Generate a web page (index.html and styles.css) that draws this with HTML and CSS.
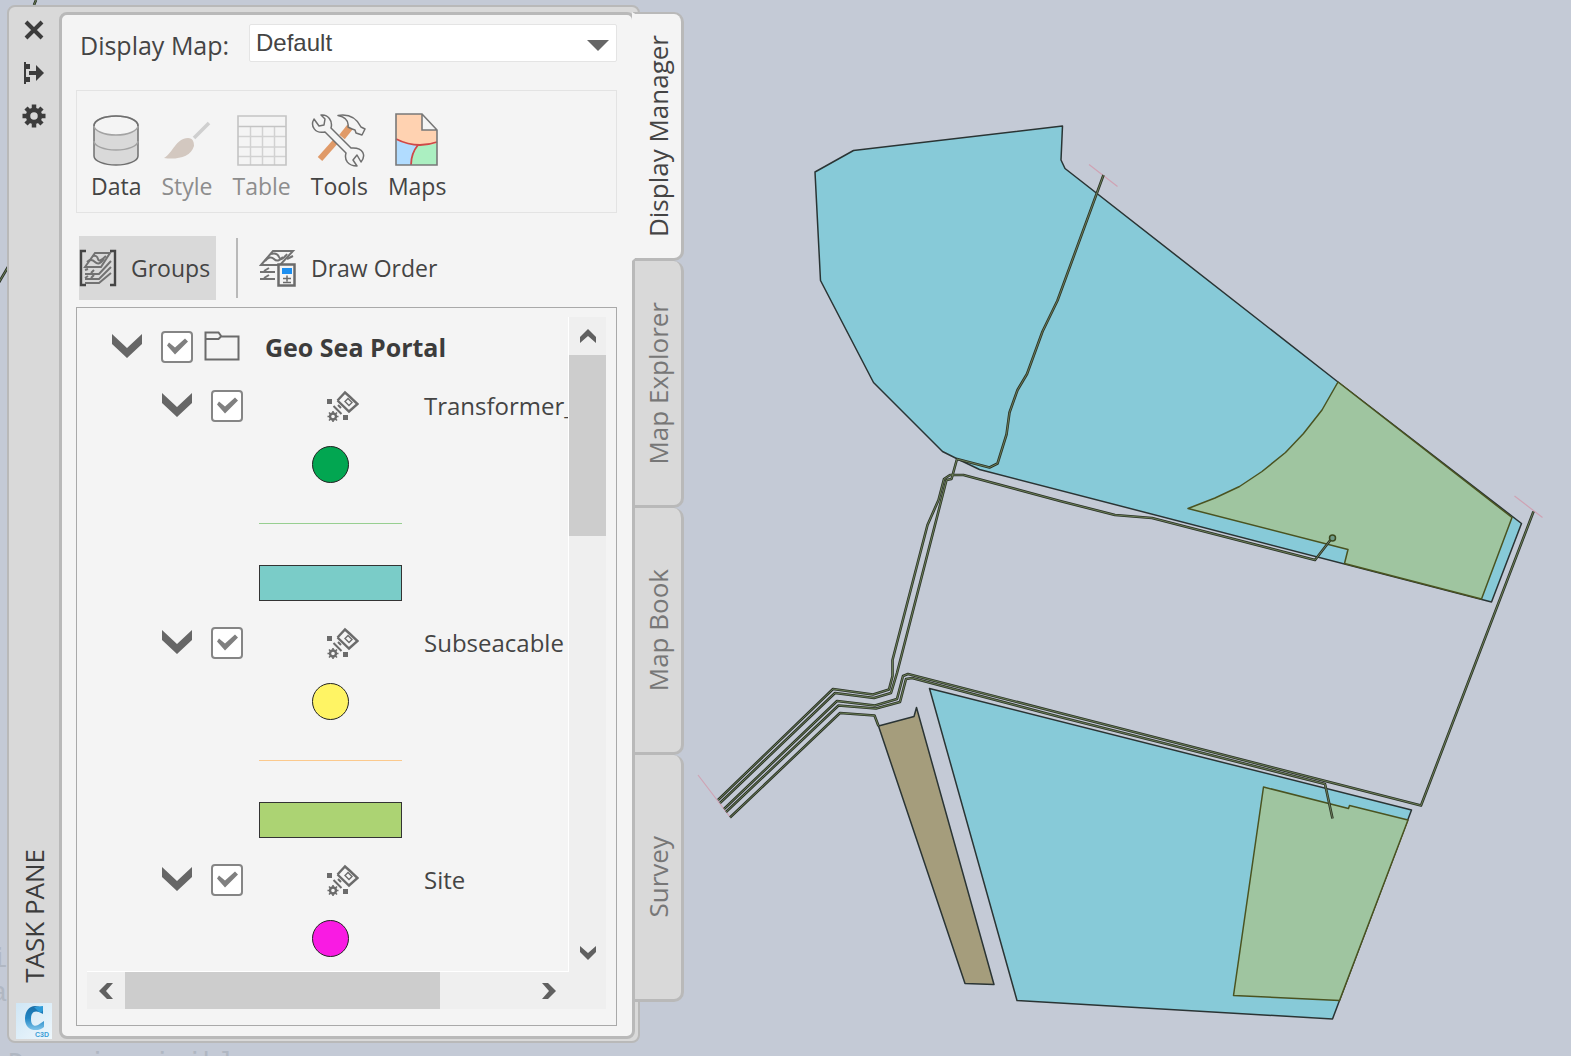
FILE: index.html
```html
<!DOCTYPE html>
<html lang="en">
<head>
<meta charset="utf-8">
<title>Task Pane</title>
<link rel="stylesheet" href="styles.css">
</head>
<body>
<svg class="drawing" viewBox="0 0 1571 1056" preserveAspectRatio="xMinYMin slice" role="img" aria-label="Map drawing">
  <defs>
    <g id="cables">
      <path d="M718 800L833 689L873 694.500L889 689.500L892.500 676L892.500 660L927.500 525L938.500 500L944 479L950 475L963.500 475L1060 501L1115 515L1152 518L1315 560L1332 538"/>
      <path d="M720 803L835 693L874 698L891 693L897 673L946.500 480L951.500 479L957 459L989.500 467.500L997.500 463.500L1006.500 434.500L1009.500 412.500L1017.500 390L1027 374L1042.500 331.500L1057.500 300.500L1103.500 175"/>
      <path d="M724 809L837 701L875 705.500L897 699L903 676L908 674L1060 713L1421 805.500L1533.500 511.500"/>
      <path d="M726 812L838.500 705.500L876 708.500L900 702L906 679L912 678L1060 717L1325 784L1332.500 818.500"/>
      <path d="M730 817.500L840 713L874.500 715.500L878.500 726"/>
      <path d="M36 0L34 5M8 267L-2 284"/>
    </g>
    <g id="scatter" fill="none" stroke="#6b6b6b" stroke-width="2.400">
      <path d="M18.500 9.500L26 1.500L30.500 5.500M30.500 5.500L38.500 13L30 20.500L18.500 9.500" transform="translate(-8 1)"/>
      <path d="M18 11.500l3-3 4 4-3 3z" stroke-width="1.400"/>
      <path d="M6.500 16l8 8M11 15l3 3" stroke-width="2"/>
      <path d="M0 9h5v5h-5zM16 25h5v5h-5z" fill="#6b6b6b" stroke="none"/>
      <circle cx="6" cy="26.500" r="3"/>
      <path d="M6 21v3M6 29v3M.5 26.500h3M8.500 26.500h3M2 22.500l2 2M10 22.500l-2 2M2 30.500l2-2M10 30.500l-2-2" stroke-width="1.600"/>
    </g>
    <g id="layers" fill="none" stroke="#727272" stroke-width="2">
      <path d="M1 15L13 1H33L20 15Z"/>
      <path d="M5 11q5-6 9-2t9-2M11 4q6-2 8 3t8-3" />
    </g>
  </defs>
  <g stroke="#2a3434" stroke-width="1.500" stroke-linejoin="round">
    <path fill="#87cad8" d="M815 172L853.500 150.500L1062.500 126L1061 160L1065 168.500L1338 382L1521.500 523.500L1491.500 602L979.500 469.500L956.500 458.500L942.500 451.500L873.500 382.500L820.500 280.500Z"/>
    <path fill="#87cad8" d="M929.500 688.500L1411.500 810L1332.500 1019L1017 1000.500Z"/>
    <g fill="#9fc5a0" stroke="#4a5320">
      <path d="M1338 382L1322 410L1303.500 433.500L1285.500 452.500L1262 471.500L1239.500 486.500L1215 498L1188 508.500L1348 549.500L1344.500 563.500L1481.500 599L1512 517.500Z"/>
      <path d="M1263.500 787L1348.500 808.500L1349.500 805.500L1408 820L1339.500 1000.500L1233.500 995.500Z"/>
    </g>
    <path fill="#a59d7c" d="M878.500 726L914 716.500L916.500 707.500L994 984.500L965 983.500Z"/>
  </g>
  <path fill="none" stroke="#cfa3b4" stroke-width="1.200" d="M698 775L730 817M1089 164.500L1117.500 186.500M1514.500 496L1542.500 517.500"/>
  <g fill="none" stroke-linejoin="round">
    <use href="#cables" stroke="#2b3228" stroke-width="2.600"/>
    <use href="#cables" stroke="#72875a" stroke-width=".9"/>
    <circle cx="1332.500" cy="538" r="3" stroke="#3c4a20" stroke-width="1.500" fill="#6f9a88"/>
  </g>
  <g class="ghost">
    <text x="-9" y="967">i</text>
    <text x="-9" y="1001">a</text>
    <text x="8" y="1071">Dynamic visible</text>
  </g>
</svg>

<main class="pane">
  <div class="frame">
    <aside class="rail">
      <button class="rail-btn" type="button" aria-label="Close"><svg width="24" height="24"><path d="M4 4L20 20M20 4L4 20" stroke="#3c3c3c" stroke-width="4" fill="none"/></svg></button>
      <button class="rail-btn" type="button" aria-label="Auto-hide"><svg width="24" height="24"><path d="M2 1h2v22H2zM4 3h4v5H4zM4 16h4v5H4z" fill="#3c3c3c"/><path d="M7 10h7V4l8 8-8 8v-6H7z" fill="#3c3c3c"/></svg></button>
      <button class="rail-btn" type="button" aria-label="Properties"><svg width="24" height="24"><circle cx="12" cy="12" r="6" fill="none" stroke="#3c3c3c" stroke-width="4.500"/><path d="M12 .5v4M12 19.500v4M.5 12h4M19.500 12h4M4 4l3 3M17 17l3 3M20 4l-3 3M7 17l-3 3" stroke="#3c3c3c" stroke-width="4.500"/></svg></button>
      <h1 class="rail-title">TASK PANE</h1>
      <svg class="logo" width="36" height="36" viewBox="0 0 36 36" aria-hidden="true">
        <defs>
          <linearGradient id="tile" x2="1" y2="1"><stop offset="0" stop-color="#cfe6f5"/><stop offset="1" stop-color="#eef7fc"/></linearGradient>
          <linearGradient id="cee" x2="0" y2="1"><stop offset="0" stop-color="#1b6fa8"/><stop offset=".5" stop-color="#1f85c4"/><stop offset="1" stop-color="#7fc4ea"/></linearGradient>
        </defs>
        <path d="M0 0h36v36H0z" fill="url(#tile)"/>
        <path d="M27 5.500V11l-4-2c-6-2-8 2-8 7 0 6 3 8 7 6l6-4v6c-5 5-19 5-19-8C9 6 16-1 27 5.500z" fill="url(#cee)"/>
        <path d="M23 9c3 1 4-1 4-3V3l-9 1" fill="#2d9bd8"/>
        <text class="logo-text" x="19" y="34">C3D</text>
      </svg>
    </aside>

    <section class="panel" id="display-manager" role="tabpanel" aria-label="Display Manager">
      <div class="map-row">
        <label class="map-label" for="display-map">Display Map:</label>
        <div class="select-wrap">
          <select class="map-select" id="display-map"><option>Default</option></select>
          <svg class="caret" width="22" height="12" aria-hidden="true"><path d="M0 0h22L11 11z" fill="#666"/></svg>
        </div>
      </div>

      <div class="toolbar">
        <button class="tool" type="button">
          <svg width="48" height="56" fill="none"><path d="M2 13v30c0 5 10 9 22 9s22-4 22-9V13" fill="#d9d9d9" stroke="#6f6f6f" stroke-width="1.500"/><path d="M2 28c0 5 10 9 22 9s22-4 22-9" stroke="#a3a3a3" stroke-width="1.500"/><ellipse cx="24" cy="12.500" rx="22" ry="9.500" fill="#f4f4f4" stroke="#a3a3a3" stroke-width="1.500"/><path d="M2 13C2 7 12 3 24 3s22 4 22 10" stroke="#6f6f6f" stroke-width="1.500"/></svg>
          Data
        </button>
        <button class="tool" type="button" disabled>
          <svg width="48" height="56" fill="none"><path d="M31 25L46 10" stroke="#cfcfcf" stroke-width="3.500"/><path d="M1 45C10 40 13 25 25 25c5 0 6 4 6 8-3 11-17 14-30 12z" fill="#d3c8c0"/></svg>
          Style
        </button>
        <button class="tool" type="button" disabled>
          <svg width="50" height="56" fill="none"><path d="M13.500 14v38M25.500 14v38M37.500 14v38M1 23.500h48M1 34h48M1 43.500h48" stroke="#d2d2d2" stroke-width="1.500"/><path d="M1 3h48v49H1zM1 13.500h48" stroke="#c4c4c4" stroke-width="1.600"/></svg>
          Table
        </button>
        <button class="tool" type="button">
          <svg width="56" height="56" fill="none"><path d="M9 46L25 28" stroke="#e09a68" stroke-width="6"/><path d="M31 24L39 14" stroke="#e09a68" stroke-width="7"/><g stroke="#6f6f6f" stroke-width="1.500" stroke-linejoin="round"><path d="M27 2.500C36 1 45 4 50 14l4 2-3 6-6-2-1-3c-4-1-5-2-7-3 1-6-3-10-10-11.500z" fill="#f4f4f4"/><path d="M10 2L14 6 13 12 8 13 3 6C-1 13 4 21 14 19L35 40c-2 7 2 13 11 13L42 47 46 42 50 49C55 43 53 34 40 35L20 15C22 8 17 1 10 2z" fill="#f4f4f4"/></g></svg>
          Tools
        </button>
        <button class="tool" type="button">
          <svg width="46" height="56"><path d="M2 1h26l15 16v35H2z" fill="#ffd2b1"/><path d="M2 27c7 3 14 5 22 5-5 6-7 13-7 20H2z" fill="#b1dcff"/><path d="M24 32c7 0 13 0 19-2v22H17c0-7 2-14 7-20z" fill="#abefc1"/><path d="M28 1v16h15z" fill="#f4f4f4"/><g fill="none"><path d="M2 26c12 6 27 8 41 3M24 32c-5 6-7 13-7 20" stroke="#cf4848" stroke-width="1.800"/><path d="M2 1h26l15 16v35H2zM28 1v16h15" stroke="#787878" stroke-width="1.600"/></g></svg>
          Maps
        </button>
      </div>

      <div class="modes">
        <button class="mode mode-on" type="button" aria-pressed="true">
          <svg width="38" height="38" fill="none"><path d="M7 2H2v34h5M31 2h5v34h-5" stroke="#454545" stroke-width="2.400"/><g stroke="#727272" stroke-width="2"><path d="M6 18L16 4h15L22 18z"/><path d="M8 13q4-4 8 0t9-3M14 7q4-1 5 3t8-3"/><path d="M6 25h14L32 12M6 21l3-1M12 24l3-3M6 30h14L32 18M12 29l3-3M6 34h14L32 24M6 29l3-2"/></g></svg>
          Groups
        </button>
        <span class="divider"></span>
        <button class="mode" type="button" aria-pressed="false">
          <svg width="38" height="38" fill="none"><use href="#layers" x="1" y="1"/><path d="M1 23h15M1 30h15M5 22l5-3M5 29l5-3M28 10l6-3" stroke="#727272" stroke-width="2"/><path d="M19.500 15.500h16v21h-16z" fill="#f4f4f4" stroke="#6b6b6b" stroke-width="2.500"/><path d="M23 19h10v6H23z" fill="#1d8ff0"/><path d="M28 26.500v6M24 29.500h8M24 33.500h8" stroke="#6b6b6b" stroke-width="1.500"/></svg>
          Draw Order
        </button>
      </div>

      <div class="tree-box">
        <ul class="tree">
          <li>
            <div class="row row-root">
              <svg class="chevron" width="30" height="26"><path d="M0 0l15 14L30 0v10L15 24 0 10z"/></svg>
              <input class="check" type="checkbox" id="l0" checked>
              <svg class="folder" width="36" height="32" fill="none"><path d="M1.500 28.500V1.500h13l3 4h17v23zM1.500 8h13l3-3" stroke="#6b6b6b" stroke-width="2"/></svg>
              <label class="root-name" for="l0">Geo Sea Portal</label>
            </div>
            <ul class="layers">
              <li class="layer">
                <div class="row">
                  <svg class="chevron" width="30" height="26"><path d="M0 0l15 14L30 0v10L15 24 0 10z"/></svg>
                  <input class="check" type="checkbox" id="l1" checked>
                  <svg class="layer-icon" width="32" height="32"><use href="#scatter"/></svg>
                  <label for="l1">Transformer_</label>
                </div>
                <div class="swatch"><span class="dot dot-green"></span></div>
                <div class="swatch"><span class="line line-green"></span></div>
                <div class="swatch"><span class="fill fill-teal"></span></div>
              </li>
              <li class="layer">
                <div class="row">
                  <svg class="chevron" width="30" height="26"><path d="M0 0l15 14L30 0v10L15 24 0 10z"/></svg>
                  <input class="check" type="checkbox" id="l2" checked>
                  <svg class="layer-icon" width="32" height="32"><use href="#scatter"/></svg>
                  <label for="l2">Subseacable</label>
                </div>
                <div class="swatch"><span class="dot dot-yellow"></span></div>
                <div class="swatch"><span class="line line-orange"></span></div>
                <div class="swatch"><span class="fill fill-lime"></span></div>
              </li>
              <li class="layer">
                <div class="row">
                  <svg class="chevron" width="30" height="26"><path d="M0 0l15 14L30 0v10L15 24 0 10z"/></svg>
                  <input class="check" type="checkbox" id="l3" checked>
                  <svg class="layer-icon" width="32" height="32"><use href="#scatter"/></svg>
                  <label for="l3">Site</label>
                </div>
                <div class="swatch"><span class="dot dot-pink"></span></div>
              </li>
            </ul>
          </li>
        </ul>
        <div class="bar bar-v">
          <button class="bar-btn" type="button" aria-label="Scroll up"><svg width="18" height="16"><path d="M1 15V9l8-8 8 8v6l-8-7z"/></svg></button>
          <span class="thumb"></span>
          <button class="bar-btn bar-end" type="button" aria-label="Scroll down"><svg width="18" height="16"><path d="M1 1v6l8 8 8-8V1L9 8z"/></svg></button>
        </div>
        <div class="bar bar-h">
          <button class="bar-btn" type="button" aria-label="Scroll left"><svg width="16" height="18"><path d="M15 1H9L1 9l8 8h6L8 9z"/></svg></button>
          <span class="thumb"></span>
          <button class="bar-btn bar-end" type="button" aria-label="Scroll right"><svg width="16" height="18"><path d="M1 1h6l8 8-8 8H1l7-8z"/></svg></button>
        </div>
      </div>
    </section>
  </div>

  <div class="tabs" role="tablist" aria-orientation="vertical">
    <button class="tab tab-on" type="button" role="tab" aria-selected="true"><span>Display Manager</span></button>
    <button class="tab" type="button" role="tab" aria-selected="false"><span>Map Explorer</span></button>
    <button class="tab" type="button" role="tab" aria-selected="false"><span>Map Book</span></button>
    <button class="tab" type="button" role="tab" aria-selected="false"><span>Survey</span></button>
  </div>
</main>
</body>
</html>
```
FILE: styles.css
```css
* { box-sizing: border-box; }

body {
  margin: 0;
  height: 100vh;
  background: #c4cad6;
  color: #444;
  font: 26px/32px "Open Sans", "Noto Sans", sans-serif;
  overflow: hidden;
}

button {
  margin: 0;
  padding: 0;
  border: 0;
  background: none;
  color: inherit;
  font: inherit;
}

svg { display: block; flex: none; }
ul { margin: 0; padding: 0; list-style: none; }

/* Map canvas behind the pane */
.drawing {
  position: absolute;
  inset: 0;
  width: 100%;
  height: 100%;
}

.ghost {
  fill: #b0b7c2;
  font: 27px "Liberation Mono", monospace;
}

/* Docked pane */
.pane {
  position: relative;
  display: flex;
  width: max-content;
  height: 100%;
  padding: 5px 0 13px 7px;
}

.frame {
  display: flex;
  padding: 5px 3px 2px 0;
  border: 2px solid #b9b9b9;
  border-radius: 8px;
  background: #d9d9d9;
}

.rail {
  display: flex;
  flex-direction: column;
  align-items: center;
  width: 50px;
  padding-top: 6px;
}

.rail-btn {
  display: grid;
  place-items: center;
  width: 36px;
  height: 43px;
  padding-bottom: 19px;
}

.rail-title {
  margin: auto 0 20px;
  color: #3c3c3c;
  font-size: 26px;
  font-weight: 400;
  line-height: 32px;
  writing-mode: vertical-rl;
  transform: rotate(180deg);
}

.logo-text {
  fill: #3d9fd6;
  font: bold 7px "Liberation Sans", sans-serif;
}

.panel {
  display: flex;
  flex-direction: column;
  width: 576px;
  padding: 9px 15px 10px 14px;
  border: 3px solid #b9b9b9;
  border-radius: 8px;
  background: #f4f4f4;
}

.map-row {
  display: flex;
  align-items: center;
  justify-content: space-between;
  padding-left: 4px;
}

.map-label { font-size: 25px; padding-top: 3px; }

.select-wrap { position: relative; width: 368px; }

.map-select {
  width: 100%;
  height: 38px;
  padding: 0 0 1px 6px;
  border: 1px solid #e4e4e4;
  border-radius: 2px;
  appearance: none;
  background: #fff;
  color: #444;
  font: 24px "Liberation Sans", sans-serif;
}

.caret {
  position: absolute;
  top: 16px;
  right: 8px;
  pointer-events: none;
}

.toolbar {
  display: flex;
  gap: 20px;
  height: 123px;
  margin-top: 28px;
  padding: 22px 14px 0;
  border: 1px solid #e3e3e3;
}

.tool {
  display: flex;
  flex-direction: column;
  align-items: center;
  height: 88px;
  color: #444;
  font-size: 23px;
  line-height: 34px;
}

.tool:disabled { color: #8d8d8d; }

.modes {
  display: flex;
  align-items: center;
  margin: 23px 0 7px 3px;
}

.mode {
  display: flex;
  align-items: center;
  gap: 14px;
  height: 64px;
  font-size: 23px;
}

.mode-on { width: 137px; background: #d9d9d9; }

.divider {
  width: 2px;
  height: 60px;
  margin: 0 21px 0 20px;
  background: #b9b9b9;
}

/* Layer tree */
.tree-box {
  flex: 1;
  display: grid;
  grid-template: minmax(0, 1fr) 37px / minmax(0, 1fr) 37px;
  min-height: 0;
  padding: 9px 10px 16px;
  border: 1px solid #a9a9a9;
}

.tree {
  overflow: hidden;
  border: solid #fff;
  border-width: 0 1px 1px 0;
  font-size: 24px;
  white-space: nowrap;
}

.row {
  display: flex;
  align-items: center;
  height: 59px;
  padding-left: 75px;
}

.row-root { padding-left: 25px; }
.layer { margin-bottom: 1px; }
.chevron { margin-right: 19px; fill: #666; }
.folder { margin: 0 25px 0 11px; }
.root-name { font-size: 25px; font-weight: 700; color: #3c3c3c; }
.layer-icon { margin: 0 65px 0 84px; }

.check {
  flex: none;
  width: 32px;
  height: 32px;
  margin: 0;
  appearance: none;
  border: 2px solid #858585;
  border-radius: 4px;
  background: #fff;
}

.check:checked::before {
  content: "";
  display: block;
  width: 28px;
  height: 28px;
  background: #808080;
  clip-path: polygon(4px 13px, 6px 10px, 12px 15px, 22px 6px, 25px 9px, 12px 22px);
}

.swatch {
  display: grid;
  place-items: center;
  width: 143px;
  height: 59px;
  margin-left: 172px;
}

.dot {
  width: 37px;
  height: 37px;
  border: 1px solid #222;
  border-radius: 50%;
}

.dot-green { background: #02a651; }
.dot-yellow { background: #fff464; }
.dot-pink { background: #f91be3; }

.line { width: 100%; height: 1px; }
.line-green { background: #97cf90; }
.line-orange { background: #fbc98d; }

.fill { width: 100%; height: 36px; border: 1px solid #333; }
.fill-teal { background: #7accc8; }
.fill-lime { background: #acd373; }

/* Scroll bars */
.bar { display: flex; background: #efefef; }
.bar-v { flex-direction: column; }
.bar-h { grid-column: 1 / -1; }

.bar-btn {
  display: grid;
  place-items: center;
  width: 37px;
  height: 38px;
}

.bar-h .bar-btn { width: 38px; height: 37px; }
.bar-btn svg { fill: #606060; }
.bar-end { margin-top: auto; }
.bar-h .bar-end { margin: 0 38px 0 auto; }
.thumb { background: #cdcdcd; }
.bar-v .thumb { height: 181px; }
.bar-h .thumb { width: 315px; }

/* Side tabs */
.tabs {
  display: flex;
  flex-direction: column;
  width: 52px;
  margin: 7px 0 41px -8px;
}

.tab {
  display: grid;
  place-items: center;
  flex: 1;
  border: 3px solid #b9b9b9;
  border-top-width: 0;
  border-radius: 0 10px 10px 0;
  background: #d9d9d9;
  color: #777;
  font-size: 26px;
}

.tab-on {
  border-top-width: 2px;
  border-left-color: #f4f4f4;
  background: #f4f4f4;
  color: #444;
}

.tab span {
  writing-mode: vertical-rl;
  transform: rotate(180deg);
}
```
